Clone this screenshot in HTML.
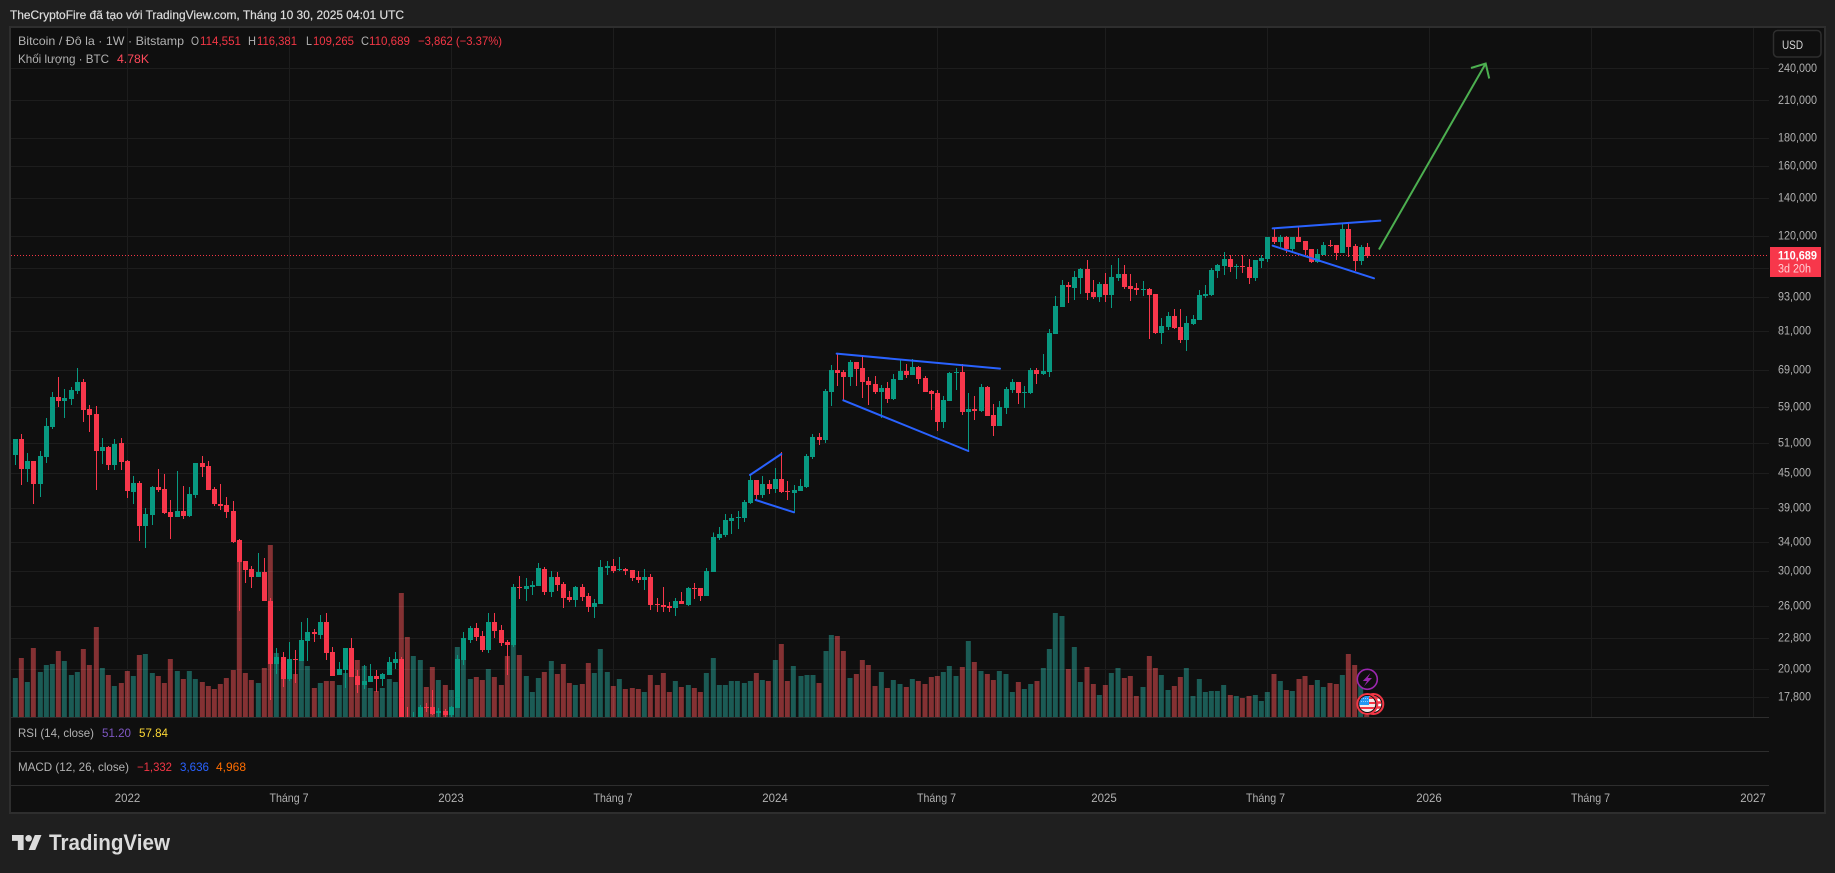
<!DOCTYPE html>
<html lang="vi">
<head>
<meta charset="utf-8">
<title>Bitcoin / Đô la</title>
<style>
html,body{margin:0;padding:0;background:#1f1f1f;width:1835px;height:873px;overflow:hidden}
svg{position:absolute;left:0;top:0;display:block}
text{font-family:"Liberation Sans","DejaVu Sans",sans-serif;font-size:12px;fill:#b2b2b2;white-space:pre}
.v{fill:#f23645}
.p{font-size:11.5px}
.gv,.rv{fill:none;stroke-width:15}
.gv{stroke:#1b5b55}
.rv{stroke:#843133}
.gw,.gb,.rw,.rb{fill:none;shape-rendering:crispEdges}
.gw,.rw{stroke-width:3}
.gb,.rb{stroke-width:15}
.gw,.gb{stroke:#089981}
.rw,.rb{stroke:#f7374b}
.bl{fill:none;stroke:#2962ff;stroke-width:6;stroke-linecap:round}
</style>
</head>
<body>
<svg width="1835" height="873" viewBox="0 0 1835 873" xmlns="http://www.w3.org/2000/svg">
<defs>
<clipPath id="pane"><rect x="11" y="28" width="1758" height="689"/></clipPath>
<clipPath id="c1"><circle cx="1367.3" cy="704" r="8"/></clipPath>
<clipPath id="c2"><circle cx="1373.3" cy="704" r="8"/></clipPath>
</defs>
<!-- frame -->
<rect x="9" y="26" width="1817" height="788" fill="#2e2e2e"/>
<rect x="11" y="28" width="1813" height="784" fill="#0f0f0f"/>

<g clip-path="url(#pane)">
<!-- volume -->
<g transform="translate(0 370) scale(.33333)">
<path class="gv" d="M46 924V1041M82 936V1041M121 906V1041M139 885V1041M157 882V1041M193 873V1041M214 915V1041M232 906V1041M307 894V1041M343 948V1041M400 918V1041M436 852V1041M457 909V1041M532 903V1041M568 903V1041M586 927V1041M775 939V1041M829 849V1041M868 927V1041M904 864V1041M922 888V1041M961 939V1041M1018 945V1041M1036 909V1041M1093 888V1041M1111 954V1041M1147 954V1041M1168 927V1041M1186 936V1041M1240 858V1041M1261 870V1041M1315 930V1041"/>
<path class="rv" d="M64 864V1041M100 834V1041M175 843V1041M250 837V1041M268 885V1041M289 771V1041M325 915V1041M364 939V1041M382 903V1041M418 855V1041M475 918V1041M493 939V1041M511 867V1041M550 927V1041M607 936V1041M625 948V1041M643 957V1041M661 942V1041M679 924V1041M700 900V1041M718 576V1041M736 909V1041M754 930V1041M793 894V1041M811 525V1041M850 876V1041M886 912V1041M943 954V1041M979 933V1041M997 933V1041M1054 885V1041M1072 870V1041M1129 963V1041M1204 669V1041M1222 801V1041M1279 951V1041M1297 891V1041M1336 945V1041"/>
</g>
<g transform="translate(440 540) scale(.33333)">
<path class="gv" d="M34 450V531M52 321V531M70 360V531M91 417V531M145 387V531M220 234V531M259 408V531M277 456V531M295 414V531M334 363V531M406 435V531M463 399V531M481 327V531M502 396V531M538 417V531M613 456V531M706 423V531M745 435V531M799 399V531M820 354V531M838 435V531M856 435V531M874 423V531M892 423V531M913 429V531M931 423V531M967 420V531M1006 360V531M1060 378V531"/>
<path class="rv" d="M109 411V531M127 420V531M163 411V531M184 435V531M202 348V531M238 345V531M313 396V531M352 402V531M370 372V531M388 429V531M427 432V531M445 369V531M520 438V531M556 447V531M577 444V531M595 447V531M631 405V531M652 435V531M670 399V531M688 456V531M724 441V531M763 444V531M781 456V531M949 399V531M985 423V531M1024 312V531M1042 423V531"/>
</g>
<g transform="translate(800 600) scale(.33333)">
<path class="gv" d="M3 228V352M21 225V352M39 225V352M78 153V352M94 105V352M150 234V352M244 216V352M280 240V352M300 252V352M337 237V352M430 216V352M448 198V352M468 228V352M505 123V352M543 213V352M598 213V352M618 222V352M637 276V352M673 267V352M692 252V352M730 204V352M748 147V352M766 39V352M786 48V352M823 141V352M841 246V352M898 285V352M934 219V352M954 204V352M1029 261V352M1084 225V352M1104 270V352M1159 204V352M1179 288V352M1198 237V352M1216 276V352M1234 273V352M1252 273V352M1271 255V352M1309 288V352M1366 285V352M1384 303V352M1402 276V352M1441 243V352M1477 273V352"/>
<path class="rv" d="M57 249V352M112 108V352M130 153V352M169 222V352M187 180V352M205 195V352M225 258V352M262 264V352M319 261V352M355 243V352M375 252V352M394 231V352M412 228V352M487 201V352M523 186V352M562 222V352M580 240V352M655 246V352M711 243V352M805 207V352M861 201V352M880 252V352M916 255V352M973 234V352M991 228V352M1009 288V352M1048 168V352M1066 204V352M1123 258V352M1141 231V352M1291 285V352M1327 294V352M1347 288V352M1422 222V352M1459 270V352M1497 237V352"/>
</g>
<g transform="translate(1300 640) scale(.33333)">
<path class="gv" d="M52 120V231M70 141V231M127 105V231M182 135V231"/>
<path class="rv" d="M15 108V231M34 135V231M90 129V231M109 132V231M145 42V231M164 75V231M200 225V231"/>
</g>

<!-- grid -->
<path fill="none" stroke="#fff" stroke-opacity=".06" shape-rendering="crispEdges" d="M11 68.5H1769M11 100.5H1769M11 138.5H1769M11 166.5H1769M11 198.5H1769M11 236.5H1769M11 268.5H1769M11 297.5H1769M11 331.5H1769M11 370.5H1769M11 407.5H1769M11 443.5H1769M11 473.5H1769M11 508.5H1769M11 542.5H1769M11 571.5H1769M11 606.5H1769M11 638.5H1769M11 669.5H1769M11 697.5H1769M127.5 28V717M289.5 28V717M451.5 28V717M613.5 28V717M775.5 28V717M937.5 28V717M1105.5 28V717M1267.5 28V717M1429.5 28V717M1591.5 28V717M1753.5 28V717"/>

<!-- price line -->
<path d="M11 255.5H1770" stroke="#f23645" stroke-width="1" stroke-dasharray="1 2" fill="none"/>

<!-- candles -->
<g transform="translate(0 370) scale(.33333)">
<path class="gw" d="M46 207V285M82 249V336M121 243V381M139 144V279M157 66V177M193 57V144M214 51V105M232 -6V72M307 204V282M343 207V300M400 318V402M436 414V534M457 348V465M532 303V441M568 351V441M586 279V384M775 549V621M829 834V912M868 816V933M904 756V873M922 744V873M961 735V807M1018 876V915M1036 834V954M1093 885V957M1111 882V936M1147 909V948M1168 861V915M1186 846V897M1240 1026V1045M1261 1005V1045M1315 1014V1045"/>
<path class="gb" d="M46 207V255M82 273V297M121 258V342M139 168V261M157 81V171M193 84V93M214 60V87M232 36V63M307 231V243M343 222V285M400 339V366M436 432V468M457 351V435M532 423V441M568 372V438M586 279V375M775 606V621M829 861V882M868 867V927M904 810V873M922 786V813M961 756V795M1018 897V915M1036 834V900M1093 933V945M1111 918V936M1147 912V927M1168 876V915M1186 867V879M1261 1011V1045M1315 1023V1029"/>
<path class="rw" d="M64 192V345M100 273V402M175 21V111M250 27V156M268 105V186M289 108V360M325 228V300M364 204V300M382 270V384M418 333V513M475 297V366M493 312V432M511 390V507M550 348V447M607 258V321M625 273V360M643 351V408M661 342V420M679 381V444M700 393V519M718 507V723M736 573V639M754 588V654M793 564V693M811 684V990M850 846V951M886 840V939M943 777V816M979 729V870M997 831V918M1054 804V921M1072 900V969M1129 900V966M1204 861V1045M1222 1011V1045M1279 999V1026M1297 960V1035M1336 1017V1045"/>
<path class="rb" d="M64 207V297M100 273V342M175 81V93M250 36V120M268 117V135M289 132V243M325 231V285M364 219V276M382 273V363M418 339V468M475 351V360M493 357V429M511 426V441M550 423V438M607 279V291M625 288V360M643 357V402M661 402V408M679 405V426M700 423V516M718 510V576M736 573V600M754 597V621M793 606V693M811 693V882M850 861V927M886 867V870M943 786V792M979 756V849M997 846V918M1054 834V921M1072 918V945M1129 918V927M1204 867V1045M1279 1011V1014M1297 1011V1032M1336 1023V1035"/>
</g>
<g transform="translate(440 540) scale(.33333)">
<path class="gw" d="M34 498V531M52 345V504M70 276V375M91 258V309M145 219V339M220 132V321M259 114V183M277 123V165M295 69V138M334 93V171M406 138V201M463 177V234M481 60V192M502 63V105M538 51V93M613 87V150M706 174V228M745 141V198M799 84V168M820 -23V96"/>
<path class="gb" d="M34 501V525M52 357V504M70 294V360M91 264V300M145 246V330M220 141V315M259 138V147M277 135V141M295 84V138M334 111V156M406 141V180M463 189V201M481 81V192M502 78V84M538 87V90M613 111V120M706 183V204M745 144V195M799 93V168M820 -9V96"/>
<path class="rw" d="M109 249V303M127 273V336M163 219V294M184 255V318M202 300V405M238 108V177M313 81V165M352 96V153M370 126V204M388 153V186M427 132V183M445 159V216M520 57V99M556 84V105M577 90V123M595 93V129M631 102V210M652 174V216M670 141V216M688 186V216M724 156V192M763 129V177M781 144V183"/>
<path class="rb" d="M109 264V291M127 288V330M163 246V273M184 270V309M202 306V315M238 141V144M313 87V156M352 111V135M370 132V174M388 171V180M427 141V171M445 168V201M520 78V93M556 87V93M577 90V114M595 111V120M631 111V195M652 192V195M670 195V201M688 198V204M724 183V192M763 144V147M781 144V168"/>
</g>
<g transform="translate(690 440) scale(.33333)">
<path class="gw" d="M88 261V300M106 222V291M124 222V282M145 213V267"/>
<path class="gb" d="M88 282V294M106 240V285M124 234V243M145 231V234"/>
</g>
<g transform="translate(740 340) scale(.33333)">
<path class="gw" d="M13 480V546M31 405V492M67 408V474M106 384V459M163 435V516M181 417V453M199 342V444M217 282V357M256 147V309M274 75V198M331 60V138M424 135V234M460 102V180M481 57V120M517 57V105M610 168V264M628 96V183M649 84V150M685 159V333M724 132V216M778 183V258M799 141V222M817 117V159M853 138V204M871 84V162"/>
<path class="gb" d="M13 486V534M31 420V489M67 432V465M106 417V447M163 450V459M181 438V453M199 348V441M217 291V351M256 153V300M274 90V156M331 66V111M424 144V156M460 117V177M481 93V120M517 81V105M610 180V246M628 99V183M649 96V99M685 207V216M724 141V213M778 201V258M799 147V204M817 126V150M853 156V159M871 90V159"/>
<path class="rw" d="M49 420V480M88 420V462M124 336V459M142 423V480M238 279V315M292 40V138M310 90V180M349 66V138M367 50V174M385 111V195M406 108V162M442 126V189M499 72V114M535 78V132M556 108V156M574 150V210M592 150V273M667 72V225M703 168V240M742 138V228M760 192V288M835 126V192M889 84V132"/>
<path class="rb" d="M49 420V465M88 432V447M124 417V456M142 453V456M238 291V300M292 90V99M310 96V111M349 66V87M367 84V126M385 123V135M406 132V156M442 144V177M499 93V105M535 81V117M556 114V156M574 153V162M592 159V246M667 96V216M703 207V213M742 141V228M760 225V258M835 126V159M889 90V102"/>
</g>
<g transform="translate(1030 230) scale(.33333)">
<path class="gw" d="M40 372V435M58 297V441M76 198V312M97 150V231M133 123V210M151 114V192M208 156V216M244 105V234M265 84V153M340 153V198M394 264V342M415 246V300M469 258V363M490 255V285M508 180V270M526 165V204M544 114V198M562 102V144M583 66V135M619 102V147"/>
<path class="gb" d="M40 423V432M58 309V426M76 228V312M97 165V231M133 141V174M151 117V144M208 162V201M244 141V195M265 132V144M340 177V180M394 288V309M415 258V291M469 279V330M490 267V282M508 195V270M526 192V198M544 120V195M562 105V123M583 87V108M619 108V111"/>
<path class="rw" d="M115 156V219M172 90V210M190 150V207M226 129V216M283 105V177M301 132V213M319 159V195M358 174V327M376 192V312M433 237V297M451 237V339M601 75V126"/>
<path class="rb" d="M115 165V171M172 117V189M190 186V201M226 162V195M283 132V171M301 168V177M319 174V180M358 177V195M376 192V309M433 258V294M451 291V330M601 87V111"/>
</g>
<g transform="translate(1240 200) scale(.33333)">
<path class="gw" d="M46 180V243M64 165V204M82 111V186M121 105V141M157 111V156M232 147V189M250 126V165M307 69V159M364 135V195"/>
<path class="gb" d="M46 180V234M64 174V183M82 111V177M121 111V126M157 111V147M232 162V186M250 135V165M307 87V159M364 141V183"/>
<path class="rw" d="M7 165V219M28 177V252M103 87V132M139 108V159M175 81V126M196 123V165M214 147V189M271 120V141M289 135V180M325 69V171M346 132V213M382 129V174"/>
<path class="rb" d="M7 198V201M28 201V234M103 111V126M139 111V147M175 111V126M196 123V150M214 147V186M271 135V138M289 135V159M325 87V141M346 138V183M382 141V168"/>
</g>

<!-- drawings -->
<path class="bl" transform="translate(1240 200) scale(.33333)" d="M98 85L421 62M98 137L402 235"/>
<path class="bl" transform="translate(740 340) scale(.33333)" d="M30 405L124 342M47 480L162 517M290 41L780 86M310 181L685 333"/>
<path fill="none" stroke="#4caf50" stroke-width="2" stroke-linecap="butt" d="M1379 249.5L1485.7 63.5M1471 68L1485.7 63.5L1489.2 78.5"/>

<!-- event icons -->
<circle cx="1367.3" cy="679.3" r="10" fill="#0f0f0f" stroke="#9c27b0" stroke-width="1.6"/>
<path d="M1370.5 673L1362.8 681H1367L1364 686.3L1372 678H1367.8Z" fill="#9c27b0"/>
<circle cx="1373.3" cy="704" r="10" fill="#0f0f0f" stroke="#f23645" stroke-width="2"/>
<g clip-path="url(#c2)">
<rect x="1365" y="696" width="17" height="16" fill="#fff"/>
<path d="M1365 697.5H1382M1365 702.5H1382M1365 707.5H1382" stroke="#f23645" stroke-width="2.4"/>
</g>
<circle cx="1367.3" cy="704" r="10" fill="#0f0f0f" stroke="#f23645" stroke-width="2"/>
<g clip-path="url(#c1)">
<rect x="1359" y="696" width="17" height="16" fill="#f4e8e8"/>
<path d="M1359 698H1376M1359 703H1376M1359 708H1376" stroke="#f23645" stroke-width="2"/>
<rect x="1359" y="696" width="10" height="9" fill="#2196f3"/>
<path d="M1361 698.5H1368M1361 701.5H1368" stroke="#bbdefb" stroke-width=".8" stroke-dasharray="1 1"/>
</g>
</g>

<!-- pane separators -->
<path d="M11 717.5H1769M11 751.5H1769M11 785.5H1769" stroke="#2e2e2e" stroke-width="1" fill="none" shape-rendering="crispEdges"/>

<!-- header -->
<text x="10" y="19" textLength="394" lengthAdjust="spacingAndGlyphs" style="fill:#dcdcdc;stroke:#dcdcdc;stroke-width:.2">TheCryptoFire đã tạo với TradingView.com, Tháng 10 30, 2025 04:01 UTC</text>

<!-- legend -->
<text x="18" y="45" textLength="166" lengthAdjust="spacingAndGlyphs">Bitcoin / Đô la · 1W · Bitstamp</text>
<text x="191" y="45" textLength="8" lengthAdjust="spacingAndGlyphs">O</text>
<text class="v" x="200" y="45" textLength="41" lengthAdjust="spacingAndGlyphs">114,551</text>
<text x="248" y="45" textLength="8" lengthAdjust="spacingAndGlyphs">H</text>
<text class="v" x="257" y="45" textLength="40" lengthAdjust="spacingAndGlyphs">116,381</text>
<text x="306" y="45" textLength="6" lengthAdjust="spacingAndGlyphs">L</text>
<text class="v" x="313" y="45" textLength="41" lengthAdjust="spacingAndGlyphs">109,265</text>
<text x="361" y="45" textLength="8" lengthAdjust="spacingAndGlyphs">C</text>
<text class="v" x="369" y="45" textLength="41" lengthAdjust="spacingAndGlyphs">110,689</text>
<text class="v" x="418" y="45" textLength="84" lengthAdjust="spacingAndGlyphs">−3,862 (−3.37%)</text>
<text x="18" y="63" textLength="91" lengthAdjust="spacingAndGlyphs">Khối lượng · BTC</text>
<text x="117" y="63" textLength="32" lengthAdjust="spacingAndGlyphs" style="fill:#ff4a5b">4.78K</text>

<!-- indicators -->
<text x="18" y="737" textLength="76" lengthAdjust="spacingAndGlyphs">RSI (14, close)</text>
<text x="102" y="737" textLength="29" lengthAdjust="spacingAndGlyphs" style="fill:#7e57c2">51.20</text>
<text x="139" y="737" textLength="29" lengthAdjust="spacingAndGlyphs" style="fill:#fdd835">57.84</text>
<text x="18" y="771" textLength="111" lengthAdjust="spacingAndGlyphs">MACD (12, 26, close)</text>
<text x="137" y="771" textLength="35" lengthAdjust="spacingAndGlyphs" style="fill:#f23645">−1,332</text>
<text x="180" y="771" textLength="29" lengthAdjust="spacingAndGlyphs" style="fill:#2962ff">3,636</text>
<text x="216" y="771" textLength="30" lengthAdjust="spacingAndGlyphs" style="fill:#ff6d00">4,968</text>

<!-- USD button -->
<rect x="1773.5" y="30.5" width="47.5" height="26.5" rx="4" fill="#0f0f0f" stroke="#2e2e2e" stroke-width="1.5"/>
<text x="1782" y="49" textLength="21" lengthAdjust="spacingAndGlyphs" style="fill:#d6d6d6">USD</text>

<!-- price axis -->
<g class="p">
<text class="p" x="1778" y="72" textLength="39" lengthAdjust="spacingAndGlyphs">240,000</text>
<text class="p" x="1778" y="104" textLength="39" lengthAdjust="spacingAndGlyphs">210,000</text>
<text class="p" x="1778" y="141.500" textLength="39" lengthAdjust="spacingAndGlyphs">180,000</text>
<text class="p" x="1778" y="169.500" textLength="39" lengthAdjust="spacingAndGlyphs">160,000</text>
<text class="p" x="1778" y="201.500" textLength="39" lengthAdjust="spacingAndGlyphs">140,000</text>
<text class="p" x="1778" y="239.500" textLength="39" lengthAdjust="spacingAndGlyphs">120,000</text>
<text class="p" x="1778" y="300.500" textLength="33" lengthAdjust="spacingAndGlyphs">93,000</text>
<text class="p" x="1778" y="334.500" textLength="33" lengthAdjust="spacingAndGlyphs">81,000</text>
<text class="p" x="1778" y="373.500" textLength="33" lengthAdjust="spacingAndGlyphs">69,000</text>
<text class="p" x="1778" y="410.500" textLength="33" lengthAdjust="spacingAndGlyphs">59,000</text>
<text class="p" x="1778" y="446.500" textLength="33" lengthAdjust="spacingAndGlyphs">51,000</text>
<text class="p" x="1778" y="476.500" textLength="33" lengthAdjust="spacingAndGlyphs">45,000</text>
<text class="p" x="1778" y="511.500" textLength="33" lengthAdjust="spacingAndGlyphs">39,000</text>
<text class="p" x="1778" y="545.500" textLength="33" lengthAdjust="spacingAndGlyphs">34,000</text>
<text class="p" x="1778" y="574.500" textLength="33" lengthAdjust="spacingAndGlyphs">30,000</text>
<text class="p" x="1778" y="609.500" textLength="33" lengthAdjust="spacingAndGlyphs">26,000</text>
<text class="p" x="1778" y="641.500" textLength="33" lengthAdjust="spacingAndGlyphs">22,800</text>
<text class="p" x="1778" y="672.500" textLength="33" lengthAdjust="spacingAndGlyphs">20,000</text>
<text class="p" x="1778" y="700.500" textLength="33" lengthAdjust="spacingAndGlyphs">17,800</text>
</g>

<!-- price badge -->
<rect x="1770" y="247" width="51" height="30" fill="#f7374b"/>
<text class="p" x="1778" y="259.500" textLength="39" lengthAdjust="spacingAndGlyphs" style="fill:#fff;font-weight:700">110,689</text>
<text class="p" x="1778" y="272.500" textLength="33" lengthAdjust="spacingAndGlyphs" style="fill:#ffd0d5">3d 20h</text>

<!-- time axis -->
<g text-anchor="middle">
<text x="127.500" y="802" textLength="25.500" lengthAdjust="spacingAndGlyphs">2022</text>
<text x="289" y="802" textLength="39" lengthAdjust="spacingAndGlyphs">Tháng 7</text>
<text x="451" y="802" textLength="25.500" lengthAdjust="spacingAndGlyphs">2023</text>
<text x="613" y="802" textLength="39" lengthAdjust="spacingAndGlyphs">Tháng 7</text>
<text x="775" y="802" textLength="25.500" lengthAdjust="spacingAndGlyphs">2024</text>
<text x="936.500" y="802" textLength="39" lengthAdjust="spacingAndGlyphs">Tháng 7</text>
<text x="1104" y="802" textLength="25.500" lengthAdjust="spacingAndGlyphs">2025</text>
<text x="1265.500" y="802" textLength="39" lengthAdjust="spacingAndGlyphs">Tháng 7</text>
<text x="1429" y="802" textLength="25.500" lengthAdjust="spacingAndGlyphs">2026</text>
<text x="1590.500" y="802" textLength="39" lengthAdjust="spacingAndGlyphs">Tháng 7</text>
<text x="1753" y="802" textLength="25.500" lengthAdjust="spacingAndGlyphs">2027</text>
</g>

<!-- logo -->
<g transform="translate(12 831.700) scale(.83)" fill="#dbdbdb">
<path d="M14 22H7V11H0V4h14v18zM28 22h-8l7.500-18h8L28 22z"/>
<circle cx="20" cy="8" r="4"/>
</g>
<text x="49" y="850" textLength="121" lengthAdjust="spacingAndGlyphs" style="font-size:22px;font-weight:700;fill:#dbdbdb">TradingView</text>
</svg>
</body>
</html>
